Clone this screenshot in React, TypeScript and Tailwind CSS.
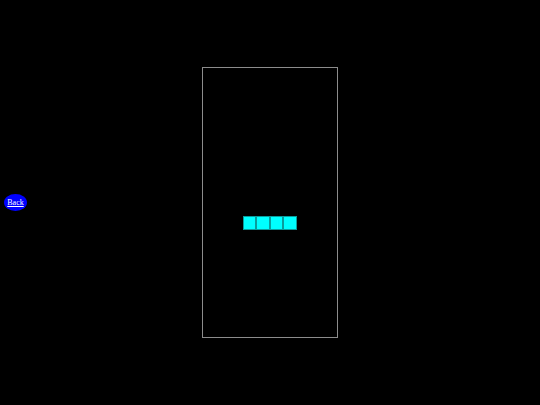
const piece = [0, 1, 2, 3];

export default function App() {
  return (
    <div className="relative flex h-[405px] w-[540px] items-center justify-center bg-black">
      <button
        type="button"
        className="absolute left-[4px] top-[194px] flex h-[17px] w-[23px] items-center justify-center rounded-[50%] bg-[#0000ff] text-[8px] text-white underline"
        style={{ fontFamily: '"Liberation Serif", serif' }}
      >
        Back
      </button>
      <div className="relative h-[271px] w-[136px] border border-[#8c8c8c]">
        {piece.map((i) => (
          <div
            key={i}
            className="absolute top-[148px] h-[13.5px] w-[13.5px] border border-[#0a9c9c] bg-[#00ffff]"
            style={{ left: 39.5 + i * 13.5 }}
          />
        ))}
      </div>
    </div>
  );
}
